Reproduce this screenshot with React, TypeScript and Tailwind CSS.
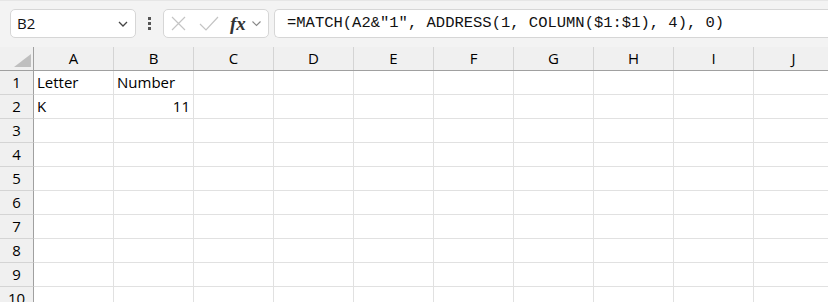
import React from "react";

const cols = ["A", "B", "C", "D", "E", "F", "G", "H", "I", "J"];
const rows = [1, 2, 3, 4, 5, 6, 7, 8, 9, 10];

const data: Record<string, { v: string; right?: boolean }> = {
  "A1": { v: "Letter" },
  "B1": { v: "Number" },
  "A2": { v: "K" },
  "B2": { v: "11", right: true },
};

export default function App() {
  return (
    <div
      className="w-[828px] h-[302px] overflow-hidden bg-white text-[#000]"
      style={{ fontFamily: '"Open Sans", "Noto Sans", sans-serif' }}
    >
      {/* Top bar */}
      <div className="h-[47px] bg-[#f3f3f3] flex items-start pt-[9px] pl-[10px] border-t border-[#e6e6e6]">
        <div className="w-[126px] h-[29px] -mt-px bg-white border border-[#d6d6d6] rounded-[5px] flex items-center justify-between pl-[6px] pr-[7px]">
          <span className="text-[15px] leading-none text-[#111]">B2</span>
          <svg width="10" height="6" viewBox="0 0 10 6" fill="none">
            <path d="M1 1 L5 5 L9 1" stroke="#444" strokeWidth="1.3" />
          </svg>
        </div>
        <div className="w-[27px] h-[29px] -mt-px flex flex-col items-center justify-center gap-[2px]">
          <div className="w-[3px] h-[3px] bg-[#555]" />
          <div className="w-[3px] h-[3px] bg-[#555]" />
          <div className="w-[3px] h-[3px] bg-[#555]" />
        </div>
        <div className="w-[106px] h-[29px] -mt-px bg-white border border-[#d6d6d6] rounded-[5px] flex items-center pl-[7px]">
          <svg width="15" height="15" viewBox="0 0 15 15" fill="none">
            <path d="M1 1 L14 14 M14 1 L1 14" stroke="#c4c4c4" strokeWidth="1.2" />
          </svg>
          <svg width="20" height="15" viewBox="0 0 20 15" fill="none" className="ml-[13px]">
            <path d="M1 8 L7 14 L19 1" stroke="#c4c4c4" strokeWidth="1.2" />
          </svg>
          <span
            className="ml-[11px] text-[19px] italic font-bold leading-none text-[#333]"
            style={{ fontFamily: '"Liberation Serif", "DejaVu Serif", serif' }}
          >
            fx
          </span>
          <svg width="9" height="6" viewBox="0 0 9 6" fill="none" className="ml-[6px]">
            <path d="M0.5 0.5 L4.5 4.5 L8.5 0.5" stroke="#888" strokeWidth="1.1" />
          </svg>
        </div>
        <div className="ml-[5px] flex-1 h-[29px] -mt-px bg-white border border-r-0 border-[#d6d6d6] rounded-l-[5px] flex items-center pl-[12px]">
          <span
            className="text-[15.5px] leading-none whitespace-pre text-[#111]"
            style={{ fontFamily: '"Liberation Mono", "DejaVu Sans Mono", monospace' }}
          >
            {'=MATCH(A2&"1", ADDRESS(1, COLUMN($1:$1), 4), 0)'}
          </span>
        </div>
      </div>

      {/* Column header */}
      <div className="flex h-[24px] bg-[#f0f0f0] border-b border-[#a0a0a0]">
        <div className="relative w-[34px] shrink-0 border-r border-[#a0a0a0]">
          <svg width="17" height="13" viewBox="0 0 17 13" className="absolute left-[14px] top-[7px]">
            <path d="M17 0 L17 13 L0 13 Z" fill="#bfbfbf" />
          </svg>
        </div>
        {cols.map((c) => (
          <div
            key={c}
            className="w-[80px] shrink-0 border-r border-[#d4d4d4] flex items-center justify-center text-[15px] leading-none"
          >
            {c}
          </div>
        ))}
      </div>

      {/* Rows */}
      {rows.map((r) => (
        <div key={r} className="flex h-[24px]">
          <div className="w-[34px] shrink-0 bg-[#f0f0f0] border-r border-[#a0a0a0] border-b border-b-[#d4d4d4] flex items-center justify-center text-[15px] leading-none">
            {r}
          </div>
          {cols.map((c) => {
            const cell = data[c + r];
            return (
              <div
                key={c}
                className={`w-[80px] shrink-0 border-r border-b border-[#e1e1e1] flex items-center px-[3px] text-[15px] leading-none ${
                  cell?.right ? "justify-end" : "justify-start"
                }`}
              >
                {cell?.v}
              </div>
            );
          })}
        </div>
      ))}
    </div>
  );
}
